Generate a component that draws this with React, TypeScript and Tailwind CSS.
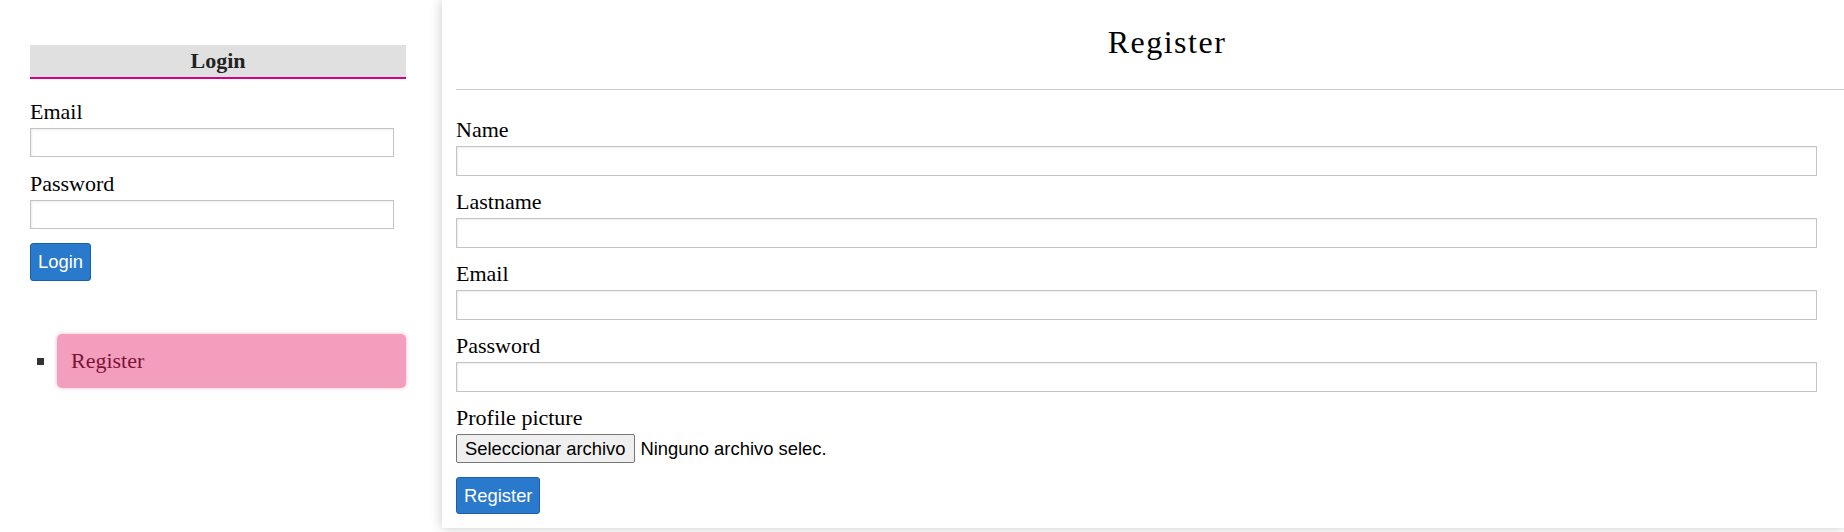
import React from "react";

const serif = "font-['Liberation_Serif','Times_New_Roman',serif]";
const sans = "font-['Liberation_Sans',Arial,sans-serif]";

const inputCls =
  "block w-full border border-[#c4c4c4] bg-white shadow-[inset_1px_1px_2px_rgba(0,0,0,0.08)] outline-none";

function Field({ label, type = "text", first = false }: { label: string; type?: string; first?: boolean }) {
  return (
    <div className={first ? "" : "mt-[13px]"}>
      <label className="block text-[22px] leading-[25px] text-black">{label}</label>
      <input type={type} className={`${inputCls} mt-[4px] h-[30px]`} />
    </div>
  );
}

export default function App() {
  return (
    <div className={`flex min-h-[532px] bg-white ${serif}`}>
      {/* Sidebar */}
      <aside className="w-[442px] shrink-0 pl-[30px] pt-[45px]">
        <div className="w-[376px]">
          <div className="h-[34px] border-b-2 border-[#d4008c] bg-[#e0e0e0] text-center text-[22px] font-bold leading-[32px] text-[#222]">
            Login
          </div>
          <div className="mt-[20px] w-[364px]">
            <label className="block text-[22px] leading-[25px] text-black">Email</label>
            <input type="email" className={`${inputCls} mt-[4px] h-[29px]`} />
            <label className="mt-[14px] block text-[22px] leading-[25px] text-black">Password</label>
            <input type="password" className={`${inputCls} mt-[4px] h-[29px]`} />
            <button
              className={`mt-[14px] h-[38px] rounded-[3px] border border-[#1d5fa5] bg-[#2979cc] px-[7px] text-[18.4px] text-white ${sans}`}
            >
              Login
            </button>
          </div>
          <ul className="mt-[53px] flex items-center">
            <li className="flex w-full items-center pl-[7px]">
              <span className="h-[7px] w-[7px] shrink-0 bg-[#333]" />
              <a className="ml-[13px] flex h-[54px] flex-1 items-center rounded-[5px] bg-[#f49ebe] px-[14px] pb-[2px] text-[22px] leading-[25px] text-[#7d1238] shadow-[0_0_4px_rgba(244,158,190,0.7)]">
                Register
              </a>
            </li>
          </ul>
        </div>
      </aside>

      {/* Register panel */}
      <main className="flex-1 self-start bg-white pb-[14px] pl-[14px] pt-[24px] shadow-[0_0_12px_rgba(0,0,0,0.22)]">
        <h1 className="pl-[34px] text-center text-[32px] font-normal leading-[37px] tracking-[1.5px] text-black">
          Register
        </h1>
        <div className="mt-[28px] h-px bg-[#c8c8c8]" />
        <form className="pr-[27px] pt-[27px]" onSubmit={(e) => e.preventDefault()}>
          <Field label="Name" first />
          <Field label="Lastname" />
          <Field label="Email" type="email" />
          <Field label="Password" type="password" />
          <div className="mt-[13px]">
            <label className="block text-[22px] leading-[25px] text-black">Profile picture</label>
            <div className={`mt-[4px] flex items-center text-[18.4px] ${sans}`}>
              <span className="flex h-[29px] items-center rounded-[2px] border border-[#767676] bg-[#efefef] px-[8px] text-black">
                Seleccionar archivo
              </span>
              <span className="ml-[6px] text-black">Ninguno archivo selec.</span>
            </div>
          </div>
          <button
            type="submit"
            className={`mt-[14px] h-[37px] rounded-[3px] border border-[#1d5fa5] bg-[#2979cc] px-[7px] text-[18.4px] text-white ${sans}`}
          >
            Register
          </button>
        </form>
      </main>
    </div>
  );
}
